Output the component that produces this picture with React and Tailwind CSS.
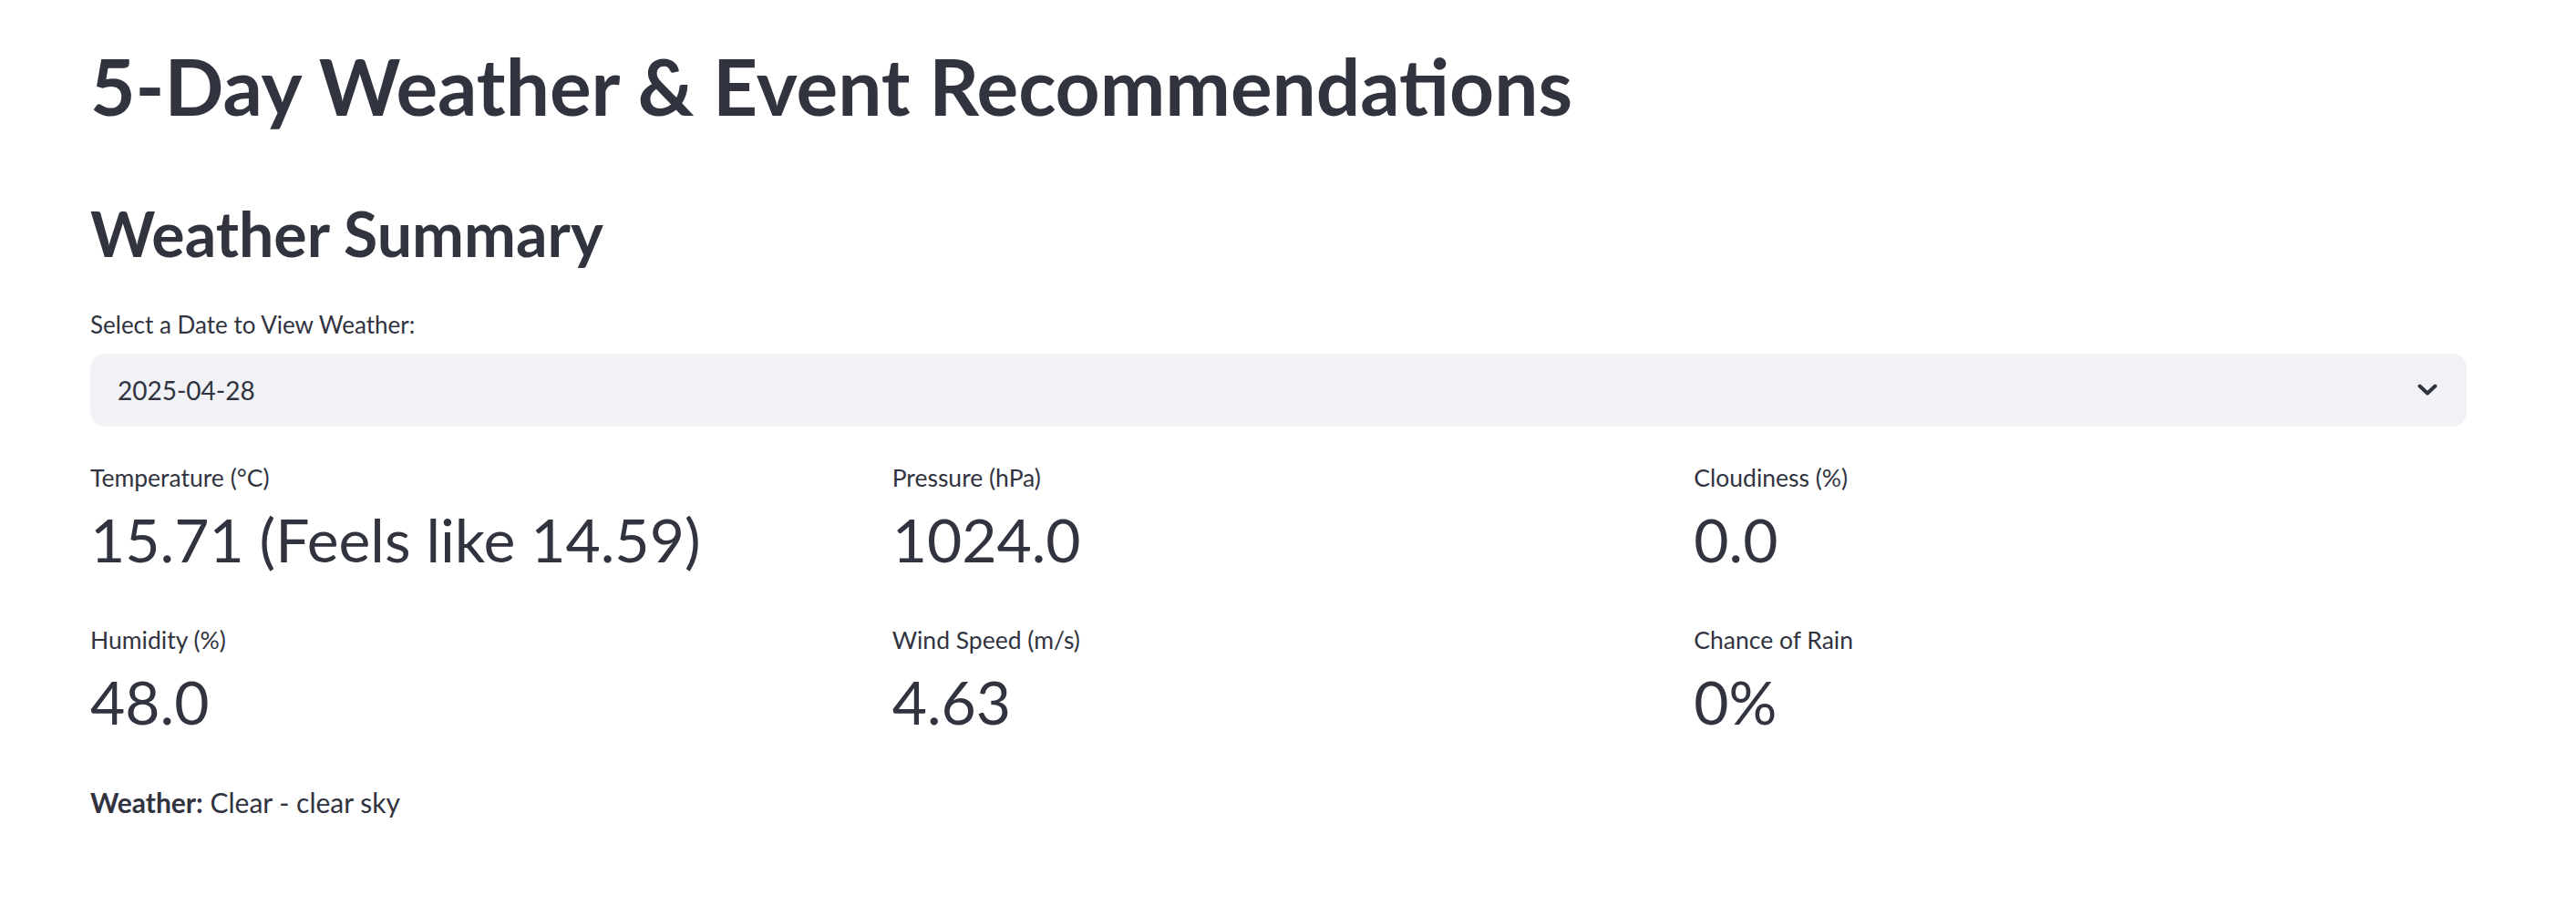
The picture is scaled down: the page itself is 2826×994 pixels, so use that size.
import React from 'react';

const FONT = "font-['Lato','Liberation_Sans',sans-serif]";

const metrics = [
  [
    { label: 'Temperature (°C)', value: '15.71 (Feels like 14.59)' },
    { label: 'Pressure (hPa)', value: '1024.0' },
    { label: 'Cloudiness (%)', value: '0.0' },
  ],
  [
    { label: 'Humidity (%)', value: '48.0' },
    { label: 'Wind Speed (m/s)', value: '4.63' },
    { label: 'Chance of Rain', value: '0%' },
  ],
];

const Metric = ({ label, value }) => (
  <div className="min-w-0">
    <div className="h-[36px] text-[26.5px] leading-[38px] whitespace-nowrap">{label}</div>
    <div className="mt-[11px] h-[80px] text-[66px] leading-[80px] whitespace-nowrap">{value}</div>
  </div>
);

export default function App() {
  return (
    <div className={`min-h-screen w-full bg-white text-[#31333F] ${FONT}`}>
      <div className="pl-[99px] pr-[120px] pt-[44px] pb-10">
        <h1 className="h-[100px] text-[85.5px] leading-[100px] font-bold whitespace-nowrap">
          5-Day Weather &amp; Event Recommendations
        </h1>

        <h2 className="mt-[72px] h-[80px] text-[68px] leading-[80px] font-bold whitespace-nowrap">
          Weather Summary
        </h2>

        <label className="mt-[42px] block h-[36px] text-[26px] leading-[36px]">
          Select a Date to View Weather:
        </label>

        <div className="mt-[14px] h-[80px] rounded-[16px] bg-[#F0F2F6] flex items-center justify-between pl-[30px] pr-[32px]">
          <span className="text-[28px]">2025-04-28</span>
          <svg width="22" height="14" viewBox="0 0 22 14" fill="none">
            <path d="M2.5 2.5 L11 10.5 L19.5 2.5" stroke="#31333F" strokeWidth="4" strokeLinecap="round" strokeLinejoin="round" />
          </svg>
        </div>

        <div className="mt-[37px] flex flex-col gap-[51px]">
          {metrics.map((row, i) => (
            <div key={i} className="grid grid-cols-3 gap-[32px]">
              {row.map((m) => (
                <Metric key={m.label} {...m} />
              ))}
            </div>
          ))}
        </div>

        <p className="mt-[50px] h-[40px] text-[30px] leading-[40px]">
          <span className="font-bold">Weather:</span> Clear - clear sky
        </p>
      </div>
    </div>
  );
}
